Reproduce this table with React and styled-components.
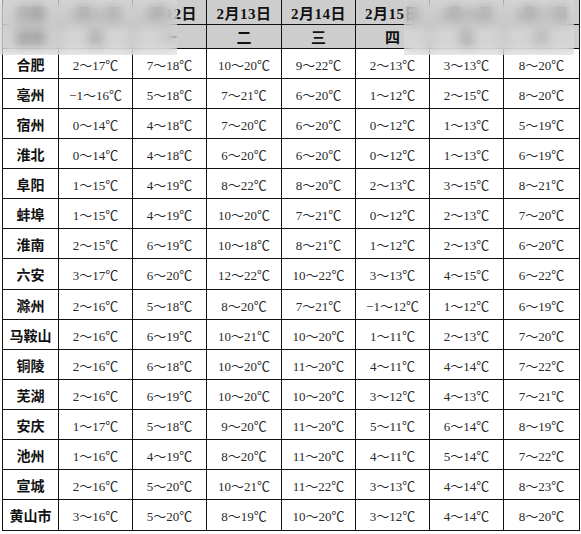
import React from 'react'
import styled, { createGlobalStyle } from 'styled-components';

const GlobalStyle = createGlobalStyle`
  html, body {
    margin: 0;
    padding: 0;
    background: #ffffff;
    overflow: hidden;
  }
`;

const Page = styled.div`
  position: relative;
  width: 581px;
  height: 534px;
  overflow: hidden;
  background: #ffffff;
`;

const Grid = styled.div`
  display: grid;
  grid-template-columns: 56px 74px 74px 75px 74px 74px 74px 76px;
  grid-template-rows: 25px 24px repeat(2, 30px 30px 30px 30px 30px 30px 30px 31px);
  margin: -1px 0 0 2px;
  width: 578px;
  border-left: 1px solid #111;
  border-top: 1px solid #111;
  box-sizing: border-box;
`;

const Cell = styled.div`
  display: flex;
  align-items: center;
  justify-content: center;
  border-right: 1px solid #111;
  border-bottom: 1px solid #111;
  box-sizing: border-box;
  white-space: nowrap;
  color: #1e1e1e;
`;

const HeadCell = styled(Cell)`
  background: #cdcdcd;
  font-family: "Liberation Serif", "Noto Sans CJK SC", serif;
  font-weight: bold;
  font-size: 15px;
  letter-spacing: ${p => (p.$week ? '0' : '0.5px')};
  color: #111;
`;

const CityCell = styled(Cell)`
  font-family: "Noto Sans CJK SC", sans-serif;
  font-weight: 700;
  font-size: 14px;
  color: #111;
`;

const TempCell = styled(Cell)`
  font-family: "Liberation Serif", "Noto Sans CJK SC", serif;
  font-size: 13px;
  color: #2a2a2a;
  padding-top: 1px;
`;

const Smudge = styled.div`
  position: absolute;
  top: 0;
  left: ${p => p.$left}px;
  width: ${p => p.$width}px;
  height: 55px;
  background: rgba(222, 222, 222, 0.5);
  backdrop-filter: blur(6px);
  -webkit-backdrop-filter: blur(6px);
`;

const dates = ['2月11日', '2月12日', '2月13日', '2月14日', '2月15日', '2月16日', '2月17日'];
const weeks = ['日', '一', '二', '三', '四', '五', '六'];

const rows = [
  ['合肥', '2～17', '7～18', '10～20', '9～22', '2～13', '3～13', '8～20'],
  ['亳州', '−1～16', '5～18', '7～21', '6～20', '1～12', '2～15', '8～20'],
  ['宿州', '0～14', '4～18', '7～20', '6～20', '0～12', '1～13', '5～19'],
  ['淮北', '0～14', '4～18', '6～20', '6～20', '0～12', '1～13', '6～19'],
  ['阜阳', '1～15', '4～19', '8～22', '8～20', '2～13', '3～15', '8～21'],
  ['蚌埠', '1～15', '4～19', '10～20', '7～21', '0～12', '2～13', '7～20'],
  ['淮南', '2～15', '6～19', '10～18', '8～21', '1～12', '2～13', '6～20'],
  ['六安', '3～17', '6～20', '12～22', '10～22', '3～13', '4～15', '6～22'],
  ['滁州', '2～16', '5～18', '8～20', '7～21', '−1～12', '1～12', '6～19'],
  ['马鞍山', '2～16', '6～19', '10～21', '10～20', '1～11', '2～13', '7～20'],
  ['铜陵', '2～16', '6～18', '10～20', '11～20', '4～11', '4～14', '7～22'],
  ['芜湖', '2～16', '6～19', '10～20', '10～20', '3～12', '4～13', '7～21'],
  ['安庆', '1～17', '5～18', '9～20', '11～20', '5～11', '6～14', '8～19'],
  ['池州', '1～16', '4～19', '8～20', '11～20', '4～11', '5～14', '7～22'],
  ['宣城', '2～16', '5～20', '10～21', '11～22', '3～13', '4～14', '8～23'],
  ['黄山市', '3～16', '5～20', '8～19', '10～20', '3～12', '4～14', '8～20'],
];

const App = () => {
  return (
    <Page>
      <GlobalStyle />
      <Grid>
        <HeadCell>日期</HeadCell>
        {dates.map(d => <HeadCell key={d}>{d}</HeadCell>)}
        <HeadCell $week>星期</HeadCell>
        {weeks.map(w => <HeadCell $week key={w}>{w}</HeadCell>)}
        {rows.map(([city, ...temps]) => (
          <React.Fragment key={city}>
            <CityCell>{city}</CityCell>
            {temps.map((t, i) => <TempCell key={i}>{t}℃</TempCell>)}
          </React.Fragment>
        ))}
      </Grid>
      <Smudge $left={0} $width={177} />
      <Smudge $left={404} $width={170} />
    </Page>
  )
}

export default App
